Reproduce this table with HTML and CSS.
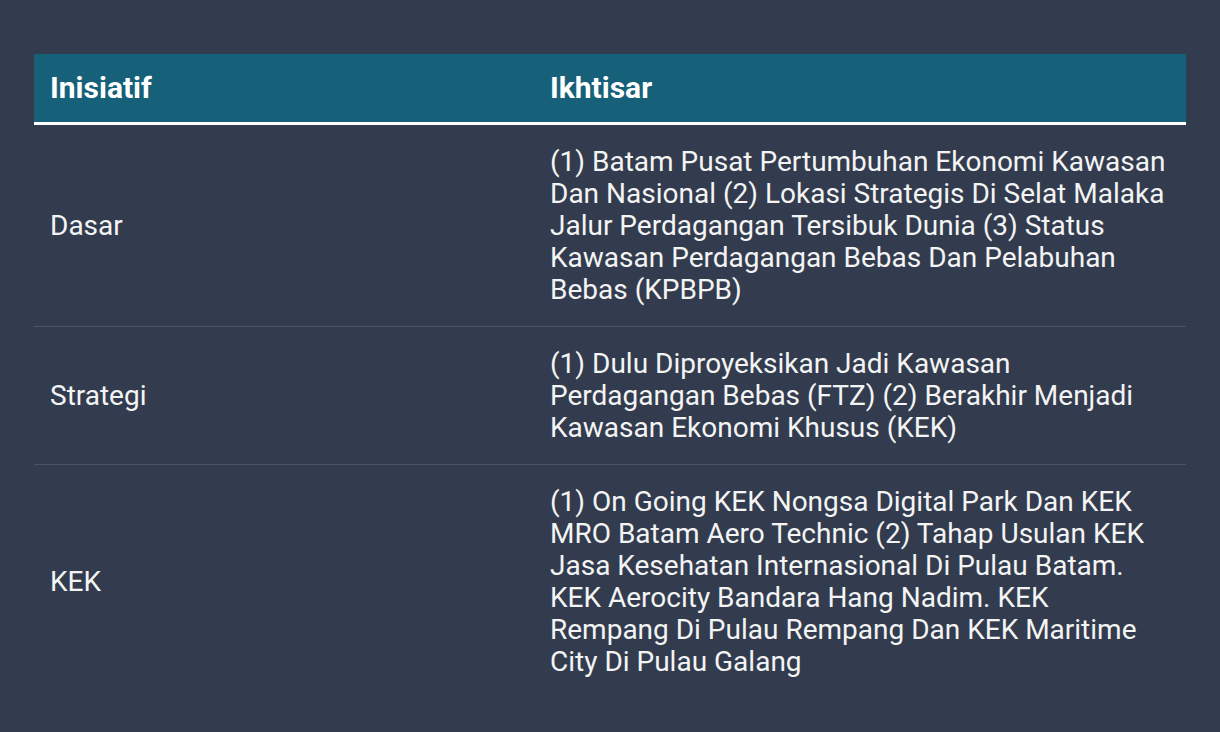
FILE: index.html
```html
<!DOCTYPE html>
<html>
<head>
<meta charset="utf-8">
<link rel="stylesheet" href="styles.css">
</head>
<body>
<div class="wrap">
<table class="tbl">
<colgroup><col class="k1"><col class="k2"></colgroup>
<thead>
<tr><th>Inisiatif</th><th>Ikhtisar</th></tr>
</thead>
<tbody>
<tr><td>Dasar</td><td>(1) Batam Pusat Pertumbuhan Ekonomi Kawasan Dan Nasional (2) Lokasi Strategis Di Selat Malaka Jalur Perdagangan Tersibuk Dunia (3) Status Kawasan Perdagangan Bebas Dan Pelabuhan Bebas (KPBPB)</td></tr>
<tr><td>Strategi</td><td>(1) Dulu Diproyeksikan Jadi Kawasan Perdagangan Bebas (FTZ) (2) Berakhir Menjadi Kawasan Ekonomi Khusus (KEK)</td></tr>
<tr><td>KEK</td><td>(1) On Going KEK Nongsa Digital Park Dan KEK MRO Batam Aero Technic (2) Tahap Usulan KEK Jasa Kesehatan Internasional Di Pulau Batam. KEK Aerocity Bandara Hang Nadim. KEK Rempang Di Pulau Rempang Dan KEK Maritime City Di Pulau Galang</td></tr>
</tbody>
</table>
</div>
</body>
</html>
```
FILE: styles.css
```css
html, body {
  margin: 0;
  padding: 0;
  background: #323c4e;
  height: 100%;
}
body {
  font-family: Roboto, "Liberation Sans", sans-serif;
  color: #f4f4f4;
}
.wrap {
  padding: 54px 34px 0 34px;
}
.tbl {
  width: 100%;
  border-collapse: separate;
  border-spacing: 0;
  table-layout: fixed;
}
.k1 { width: 500px; }
.tbl th {
  background: #16607a;
  color: #ffffff;
  font-weight: 700;
  font-size: 30px;
  line-height: 36px;
  text-align: left;
  padding: 16px 16px;
  border-bottom: 3px solid #ffffff;
}
.tbl td {
  font-size: 28px;
  line-height: 32px;
  padding: 20.5px 16px;
  vertical-align: middle;
  border-bottom: 1px solid #4b5567;
}
.tbl tbody tr:last-child td { border-bottom: none; }
```
